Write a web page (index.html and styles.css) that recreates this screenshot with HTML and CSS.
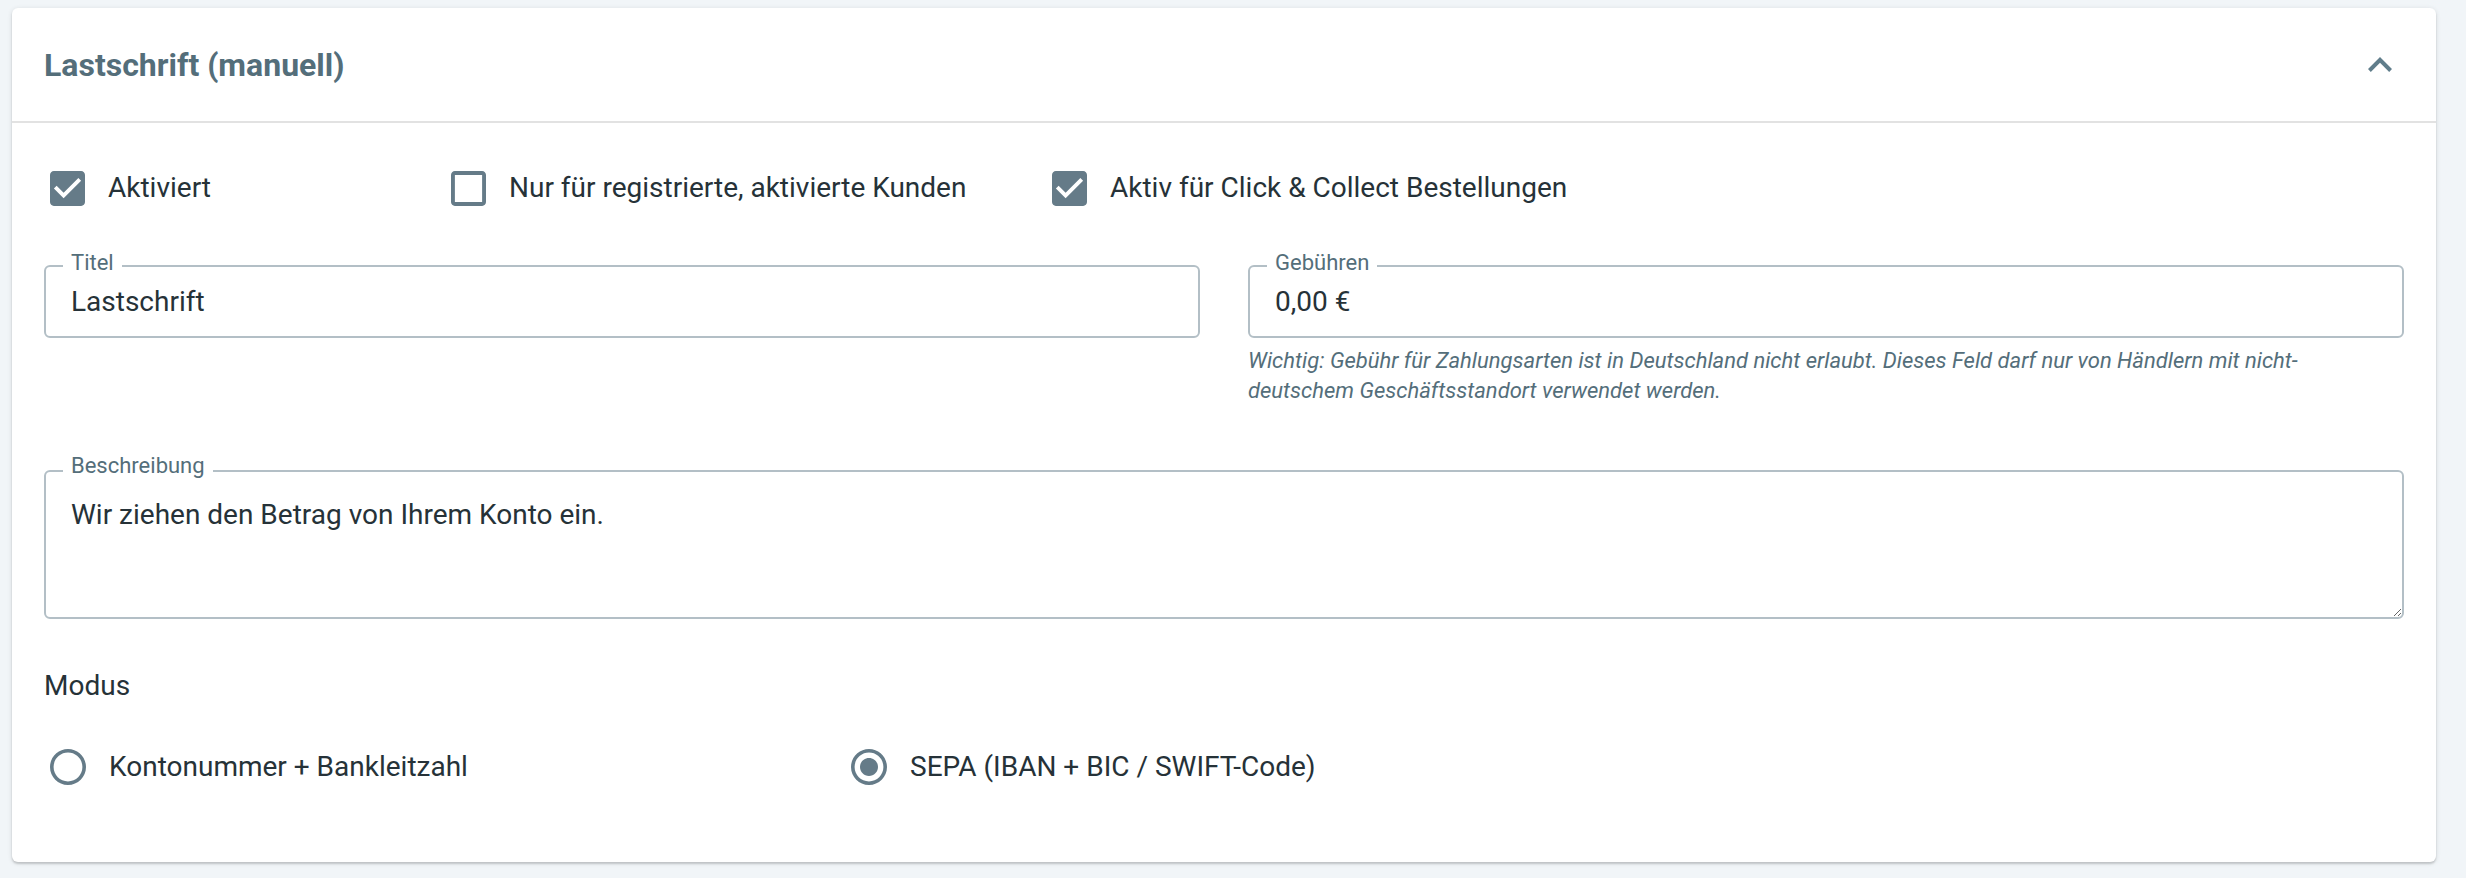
FILE: index.html
```html
<!DOCTYPE html>
<html lang="de">
<head>
<meta charset="utf-8">
<title>Lastschrift (manuell)</title>
<link rel="stylesheet" href="styles.css">
</head>
<body>
<section class="card">
  <header class="card-header">
    <h2 class="title">Lastschrift (manuell)</h2>
    <svg class="chevron" viewBox="6 8 12 7.41" aria-hidden="true"><path d="M12 8l-6 6 1.41 1.41L12 10.83l4.59 4.58L18 14z"/></svg>
  </header>
  <div class="card-body">
    <div class="check-row">
      <label class="check">
        <svg class="box" viewBox="3 3 18 18"><path d="M19 3H5c-1.11 0-2 .9-2 2v14c0 1.1.89 2 2 2h14c1.11 0 2-.9 2-2V5c0-1.1-.89-2-2-2zm-9 14l-5-5 1.41-1.41L10 14.17l7.59-7.59L19 8l-9 9z"/></svg>
        <span>Aktiviert</span>
      </label>
      <label class="check">
        <svg class="box" viewBox="3 3 18 18"><path d="M19 5v14H5V5h14m0-2H5c-1.1 0-2 .9-2 2v14c0 1.1.9 2 2 2h14c1.1 0 2-.9 2-2V5c0-1.1-.9-2-2-2z"/></svg>
        <span>Nur für registrierte, aktivierte Kunden</span>
      </label>
      <label class="check">
        <svg class="box" viewBox="3 3 18 18"><path d="M19 3H5c-1.11 0-2 .9-2 2v14c0 1.1.89 2 2 2h14c1.11 0 2-.9 2-2V5c0-1.1-.89-2-2-2zm-9 14l-5-5 1.41-1.41L10 14.17l7.59-7.59L19 8l-9 9z"/></svg>
        <span>Aktiv für Click &amp; Collect Bestellungen</span>
      </label>
    </div>

    <div class="fields">
      <div class="field-col">
        <div class="field">
          <span class="field-label">Titel</span>
          <span class="field-value">Lastschrift</span>
        </div>
      </div>
      <div class="field-col">
        <div class="field">
          <span class="field-label">Gebühren</span>
          <span class="field-value">0,00 €</span>
        </div>
        <p class="helper">Wichtig: Gebühr für Zahlungsarten ist in Deutschland nicht erlaubt. Dieses Feld darf nur von Händlern mit nicht-deutschem Geschäftsstandort verwendet werden.</p>
      </div>
    </div>

    <div class="area-wrap">
      <span class="field-label">Beschreibung</span>
      <textarea class="area" readonly>Wir ziehen den Betrag von Ihrem Konto ein.</textarea>
    </div>

    <div class="modus">Modus</div>

    <div class="radio-row">
      <label class="check">
        <svg class="radio" viewBox="2 2 20 20"><path d="M12 2C6.48 2 2 6.48 2 12s4.48 10 10 10 10-4.48 10-10S17.52 2 12 2zm0 18c-4.42 0-8-3.58-8-8s3.58-8 8-8 8 3.58 8 8-3.58 8-8 8z"/></svg>
        <span>Kontonummer + Bankleitzahl</span>
      </label>
      <label class="check">
        <svg class="radio" viewBox="2 2 20 20"><path d="M12 7c-2.76 0-5 2.24-5 5s2.24 5 5 5 5-2.24 5-5-2.24-5-5-5zm0-5C6.48 2 2 6.48 2 12s4.48 10 10 10 10-4.48 10-10S17.52 2 12 2zm0 18c-4.42 0-8-3.58-8-8s3.58-8 8-8 8 3.58 8 8-3.58 8-8 8z"/></svg>
        <span>SEPA (IBAN + BIC / SWIFT-Code)</span>
      </label>
    </div>
  </div>
</section>
</body>
</html>
```

FILE: styles.css
```css
* { box-sizing: border-box; }

html, body { height: 100%; }

body {
  margin: 0;
  padding: 8px 30px 16px 12px;
  background: #f1f5f8;
  font-family: Roboto, "Liberation Sans", sans-serif;
  color: #263238;
}

.card {
  background: #fff;
  border-radius: 6px;
  box-shadow: 0 2px 2px rgba(0, 0, 0, 0.14), 0 1px 5px rgba(0, 0, 0, 0.12);
}

.card-header {
  height: 115px;
  display: flex;
  align-items: center;
  justify-content: space-between;
  padding: 0 44px 0 32px;
  border-bottom: 2px solid #e2e2e2;
}

.title {
  margin: 0;
  font-size: 32px;
  font-weight: 700;
  color: #546e7a;
}

.chevron {
  width: 24px;
  height: 15px;
  fill: #607d8b;
}

.card-body {
  padding: 44px 32px 74px;
}

.check-row {
  display: grid;
  grid-template-columns: 401px 601px auto;
  height: 42px;
  padding-left: 6px;
}

.radio-row {
  display: grid;
  grid-template-columns: 801px auto;
  height: 42px;
  margin-top: 40px;
  padding-left: 6px;
}

.check {
  display: flex;
  align-items: center;
  gap: 23px;
  font-size: 28px;
  line-height: 42px;
  color: #263238;
}

.box {
  width: 35px;
  height: 35px;
  fill: #657b88;
  flex: none;
}

.radio {
  width: 36px;
  height: 36px;
  fill: #657b88;
  flex: none;
}

.fields {
  display: grid;
  grid-template-columns: 1fr 1fr;
  column-gap: 48px;
  margin-top: 56px;
}

.field {
  position: relative;
  height: 73px;
  border: 2px solid #b3bfc6;
  border-radius: 6px;
  display: flex;
  align-items: center;
  padding: 0 25px;
}

.field-value {
  font-size: 28px;
  color: #263238;
}

.field-label {
  position: absolute;
  top: -16px;
  left: 17px;
  padding: 0 8px;
  background: #fff;
  font-size: 22px;
  line-height: 24px;
  color: #546e7a;
}

.helper {
  margin: 8px 0 0;
  font-size: 22px;
  line-height: 30px;
  font-style: italic;
  color: #546e7a;
  padding-right: 40px;
}

.area-wrap {
  position: relative;
  margin-top: 64px;
}

.area-wrap .field-label {
  left: 19px;
  z-index: 1;
}

.area {
  display: block;
  width: 100%;
  height: 149px;
  border: 2px solid #b3bfc6;
  border-radius: 6px;
  padding: 23px 25px;
  font-family: Roboto, "Liberation Sans", sans-serif;
  font-size: 28px;
  line-height: 40px;
  color: #263238;
  background: #fff;
  outline: none;
}

.modus {
  margin-top: 47px;
  font-size: 28px;
  line-height: 40px;
  color: #263238;
}
```
